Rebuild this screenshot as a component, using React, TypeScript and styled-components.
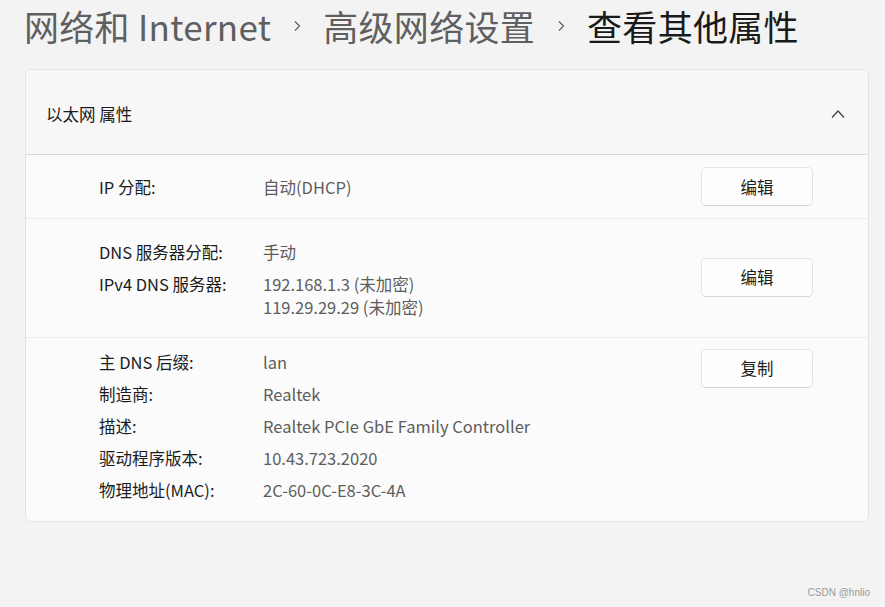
import React from "react";
import styled, { createGlobalStyle } from "styled-components";

const GlobalStyle = createGlobalStyle`
  html, body {
    margin: 0;
    padding: 0;
    background: #f3f3f3;
  }
  body {
    font-family: "Noto Sans CJK SC", "Noto Sans", sans-serif;
    color: #1b1b1b;
  }
`;

const Page = styled.div`
  width: 885px;
  height: 607px;
  background: #f3f3f3;
  display: flex;
  flex-direction: column;
  overflow: hidden;
`;

const Breadcrumb = styled.h1`
  margin: 0;
  padding: 0 0 0 24px;
  display: flex;
  align-items: center;
  gap: 22px;
  font-size: 35px;
  line-height: 51px;
  font-weight: 400;
`;

const Crumb = styled.span<{ $current?: boolean }>`
  color: ${(p) => (p.$current ? "#1a1a1a" : "#5f5f5f")};
  white-space: nowrap;
  letter-spacing: 0.3px;
`;

const Sep = styled.svg`
  width: 8px;
  height: 12px;
  flex: none;
`;

const Card = styled.section`
  margin: 18px 16px 0 25px;
  border: 1px solid #e3e3e3;
  border-radius: 6px;
  background: #fbfbfb;
  overflow: hidden;
`;

const Header = styled.div`
  height: 85px;
  box-sizing: border-box;
  background: #f7f7f7;
  border-bottom: 1px solid #d9d9d9;
  display: flex;
  align-items: center;
  justify-content: space-between;
  padding: 3px 23px 0 20px;
  font-size: 16.5px;
  color: #1b1b1b;
`;

const Row = styled.div<{ $pad: string; $align?: string; $last?: boolean }>`
  display: flex;
  justify-content: space-between;
  align-items: ${(p) => p.$align || "center"};
  padding: ${(p) => p.$pad};
  padding-left: 73px;
  padding-right: 55px;
  border-bottom: ${(p) => (p.$last ? "none" : "1px solid #ebebeb")};
`;

const Fields = styled.div`
  display: grid;
  grid-template-columns: 164px auto;
  font-size: 16.5px;
`;

const Label = styled.div`
  line-height: 32px;
  color: #1b1b1b;
  white-space: nowrap;
`;

const Value = styled.div<{ $multi?: boolean }>`
  line-height: ${(p) => (p.$multi ? "23px" : "32px")};
  padding-top: ${(p) => (p.$multi ? "4.5px" : "0")};
  color: #5d5d5d;
  white-space: nowrap;
`;

const Button = styled.button<{ $top?: number }>`
  width: 112px;
  height: 39px;
  margin-top: ${(p) => p.$top || 0}px;
  background: #fefefe;
  border: 1px solid #e5e5e5;
  border-bottom-color: #d3d3d3;
  border-radius: 5px;
  font-family: inherit;
  font-size: 16.5px;
  color: #1b1b1b;
  flex: none;
`;

const Watermark = styled.div`
  margin-top: auto;
  padding: 0 15px 9px 0;
  text-align: right;
  font-family: "Liberation Sans", Arial, sans-serif;
  font-size: 10px;
  color: #9a9a9a;
`;

const Chevron = () => (
  <Sep viewBox="0 0 8 12">
    <path d="M2 1.5 L6.5 6 L2 10.5" fill="none" stroke="#666" strokeWidth="1.3" />
  </Sep>
);

const UpChevron = () => (
  <svg width="14" height="8" viewBox="0 0 14 8">
    <path d="M1 7.5 L7 1 L13 7.5" fill="none" stroke="#3d3d3d" strokeWidth="1.2" />
  </svg>
);

export default function App() {
  return (
    <Page>
      <GlobalStyle />
      <Breadcrumb>
        <Crumb>网络和 Internet</Crumb>
        <Chevron />
        <Crumb>高级网络设置</Crumb>
        <Chevron />
        <Crumb $current>查看其他属性</Crumb>
      </Breadcrumb>
      <Card>
        <Header>
          <span>以太网 属性</span>
          <UpChevron />
        </Header>
        <Row $pad="12px 0 12px">
          <Fields>
            <Label>IP 分配:</Label>
            <Value>自动(DHCP)</Value>
          </Fields>
          <Button>编辑</Button>
        </Row>
        <Row $pad="17px 0 18px">
          <Fields>
            <Label>DNS 服务器分配:</Label>
            <Value>手动</Value>
            <Label>IPv4 DNS 服务器:</Label>
            <Value $multi>
              192.168.1.3 (未加密)
              <br />
              119.29.29.29 (未加密)
            </Value>
          </Fields>
          <Button>编辑</Button>
        </Row>
        <Row $pad="8px 0 15px" $align="flex-start" $last>
          <Fields>
            <Label>主 DNS 后缀:</Label>
            <Value>lan</Value>
            <Label>制造商:</Label>
            <Value>Realtek</Value>
            <Label>描述:</Label>
            <Value>Realtek PCIe GbE Family Controller</Value>
            <Label>驱动程序版本:</Label>
            <Value>10.43.723.2020</Value>
            <Label>物理地址(MAC):</Label>
            <Value>2C-60-0C-E8-3C-4A</Value>
          </Fields>
          <Button $top={3}>复制</Button>
        </Row>
      </Card>
      <Watermark>CSDN @hnlio</Watermark>
    </Page>
  );
}
